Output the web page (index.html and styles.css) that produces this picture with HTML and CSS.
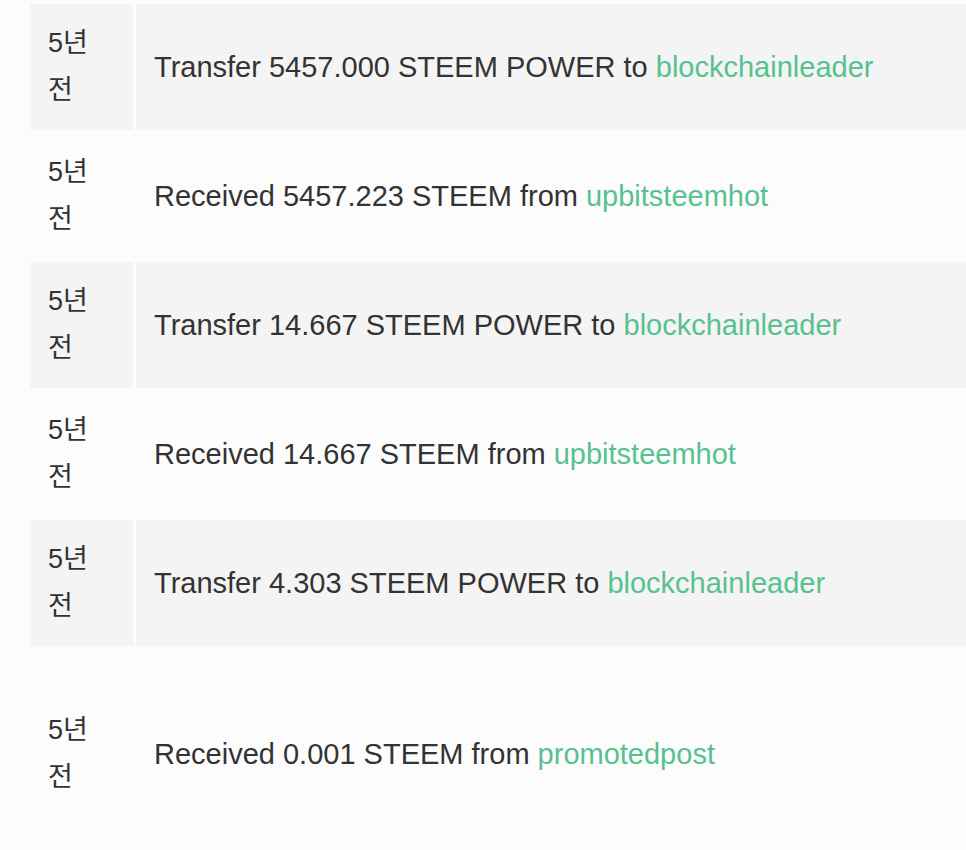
FILE: index.html
```html
<!DOCTYPE html>
<html lang="ko">
<head>
<meta charset="utf-8">
<title>Transfers</title>
<link rel="stylesheet" href="styles.css">
</head>
<body>
<table class="history">
  <tbody>
    <tr class="row shaded">
      <td class="when">5년 전</td>
      <td class="what">Transfer 5457.000 STEEM POWER to <a class="acct" href="#">blockchainleader</a></td>
    </tr>
    <tr class="row">
      <td class="when">5년 전</td>
      <td class="what">Received 5457.223 STEEM from <a class="acct" href="#">upbitsteemhot</a></td>
    </tr>
    <tr class="row shaded">
      <td class="when">5년 전</td>
      <td class="what">Transfer 14.667 STEEM POWER to <a class="acct" href="#">blockchainleader</a></td>
    </tr>
    <tr class="row">
      <td class="when">5년 전</td>
      <td class="what">Received 14.667 STEEM from <a class="acct" href="#">upbitsteemhot</a></td>
    </tr>
    <tr class="row shaded">
      <td class="when">5년 전</td>
      <td class="what">Transfer 4.303 STEEM POWER to <a class="acct" href="#">blockchainleader</a></td>
    </tr>
    <tr class="row tall">
      <td class="when">5년 전</td>
      <td class="what">Received 0.001 STEEM from <a class="acct" href="#">promotedpost</a></td>
    </tr>
  </tbody>
</table>
</body>
</html>
```
FILE: styles.css
```css
html, body {
  margin: 0;
  padding: 0;
  background: #fcfcfc;
  overflow: hidden;
}
body {
  font-family: "Liberation Sans", Arial, "Noto Sans CJK KR", sans-serif;
  color: #333333;
  font-size: 27px;
}
.history {
  margin-left: 27px;
  margin-top: 1px;
  border-collapse: separate;
  border-spacing: 3px;
  width: 1000px;
}
.row td {
  vertical-align: middle;
  line-height: 47px;
  padding: 16px 18px;
}
.row.shaded td {
  background: #f4f4f4;
}
.when {
  width: 67px;
  font-family: "Liberation Sans", "Noto Sans CJK KR", sans-serif;
}
.what {
  padding-left: 19px;
  white-space: nowrap;
  font-size: 29px;
}
.row.tall td {
  padding-top: 58px;
  padding-bottom: 58px;
}
.acct {
  color: #57c18f;
  text-decoration: none;
}
```
